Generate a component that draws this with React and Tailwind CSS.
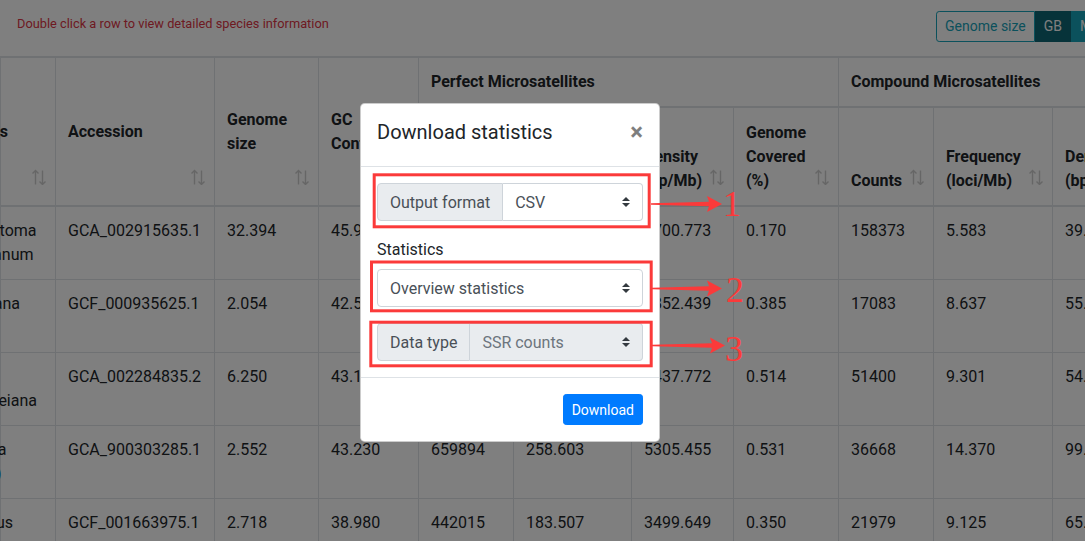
import React from 'react';

const widths = [55, 159, 104, 100, 95, 118, 102, 105, 95, 119, 130];

const rows = [
  {
    sp: [['Schistostoma', 35.5, ''], ['solanum', 32.5, '']],
    v: ['GCA_002915635.1', '32.394', '45.912', '1480389', '45.698', '4700.773', '0.170', '158373', '5.583', '39.581'],
  },
  {
    sp: [['Alternaria cassiana', 19, ''], ['\u00a0', 0, '']],
    v: ['GCF_000935625.1', '2.054', '42.512', '96318', '46.893', '2852.439', '0.385', '17083', '8.637', '55.207'],
  },
  {
    sp: [['\u00a0', 0, ''], ['thaleiana', 36, '']],
    v: ['GCA_002284835.2', '6.250', '43.125', '283140', '45.302', '4437.772', '0.514', '51400', '9.301', '54.918'],
  },
  {
    sp: [['Candida', 5.5, ''], ['(ref)', 0.5, 'text-[#007bff]']],
    v: ['GCA_900303285.1', '2.552', '43.230', '659894', '258.603', '5305.455', '0.531', '36668', '14.370', '99.623'],
  },
  {
    sp: [['Aspergillus', 12, ''], ['\u00a0', 0, '']],
    v: ['GCF_001663975.1', '2.718', '38.980', '442015', '183.507', '3499.649', '0.350', '21979', '9.125', '65.044'],
  },
];

function SortIcon() {
  return (
    <svg
      width="16"
      height="16"
      viewBox="0 0 16 16"
      fill="none"
      stroke="#cdcdcd"
      strokeWidth="1.4"
      className="absolute right-[8px] bottom-[20px]"
    >
      <path d="M4.5 15.5V1.5M1.5 4.5l3-3 3 3" />
      <path d="M11.5 1.5v14M8.5 12.5l3 3 3-3" />
    </svg>
  );
}

function Line({ text, end, className = '' }) {
  return (
    <div className={`flex justify-end ${className}`} style={{ width: end }}>
      <span className="whitespace-nowrap">{text}</span>
    </div>
  );
}

function SelectArrows() {
  return (
    <svg width="8" height="10" viewBox="0 0 4 5">
      <path fill="#343a40" d="M2 0L0 2h4zm0 5L0 3h4z" />
    </svg>
  );
}

function arrowPoints(x1, y, x2) {
  return `${x1},${y - 0.7} ${x2 - 13},${y - 2.2} ${x2 - 15},${y - 8} ${x2},${y} ${x2 - 15},${y + 8} ${x2 - 13},${y + 2.2} ${x1},${y + 0.7}`;
}

const th = 'relative border border-[#dee2e6] border-b-2 px-3 py-3 text-left font-bold';
const th2 = 'relative border border-[#dee2e6] border-b-2 px-3 pt-[13px] pb-3 text-left font-bold align-bottom';
const td = 'border border-[#dee2e6] px-3 py-3 align-top';

export default function App() {
  return (
    <div className="relative w-[1085px] h-[541px] overflow-hidden bg-white font-['Roboto',sans-serif] text-[#212529]">
      {/* Page behind */}
      <div className="w-[1182px]">
        <div className="flex items-start justify-between h-[57px] border-b border-[#dee2e6] w-[1110px]">
          <small className="ml-[17px] mt-[14px] text-[12.8px] leading-[19px] text-[#dc3545]">
            Double click a row to view detailed species information
          </small>
          <div className="flex mt-[11px] h-[31px] text-[14px] leading-[21px]">
            <div className="flex items-center px-2 border border-[#17a2b8] rounded-l-[3.2px] text-[#17a2b8]">
              Genome size
            </div>
            <div className="flex items-center px-2 bg-[#0f6674] border border-[#0f6674] text-white">GB</div>
            <div className="flex items-center px-2 bg-[#17a2b8] border border-[#17a2b8] text-white">MB</div>
          </div>
        </div>
        <table className="table-fixed border-collapse w-[1182px] text-[16px] leading-6">
          <colgroup>
            {widths.map((w, i) => (
              <col key={i} style={{ width: w }} />
            ))}
          </colgroup>
          <thead>
            <tr>
              <th rowSpan={2} className={`${th} align-middle !pl-0`}>
                <Line text="Species" end={7} />
                <SortIcon />
              </th>
              <th rowSpan={2} className={`${th} align-middle`}>
                Accession
                <SortIcon />
              </th>
              <th rowSpan={2} className={`${th} align-middle`}>
                Genome size
                <SortIcon />
              </th>
              <th rowSpan={2} className={`${th} align-middle`}>
                GC Content
                <SortIcon />
              </th>
              <th colSpan={4} className={`${th} align-bottom`}>
                Perfect Microsatellites
              </th>
              <th colSpan={3} className={`${th} align-bottom`}>
                Compound Microsatellites
              </th>
            </tr>
            <tr>
              <th className={th2}>
                Counts
                <SortIcon />
              </th>
              <th className={th2}>
                Frequency (loci/Mb)
                <SortIcon />
              </th>
              <th className={th2}>
                Density (bp/Mb)
                <SortIcon />
              </th>
              <th className={th2}>
                Genome Covered (%)
                <SortIcon />
              </th>
              <th className={th2}>
                Counts
                <SortIcon />
              </th>
              <th className={th2}>
                Frequency (loci/Mb)
                <SortIcon />
              </th>
              <th className={th2}>
                Density (bp/Mb)
                <SortIcon />
              </th>
            </tr>
          </thead>
          <tbody>
            {rows.map((r, i) => (
              <tr key={i}>
                <td className={`${td} !pl-0`}>
                  {r.sp.map(([t, e, c], j) => (
                    <Line key={j} text={t} end={e} className={c} />
                  ))}
                </td>
                {r.v.map((v, j) => (
                  <td key={j} className={td}>
                    {v}
                  </td>
                ))}
              </tr>
            ))}
          </tbody>
        </table>
      </div>

      {/* Backdrop */}
      <div className="absolute inset-0 bg-black/50" />

      {/* Modal */}
      <div className="absolute left-[360px] top-[103px] w-[300px] bg-white border border-black/20 rounded-[4.8px]">
        <div className="flex items-start justify-between p-4 border-b border-[#dee2e6]">
          <h5 className="-mt-[3px] mb-[3px] text-[20px] leading-[30px] font-normal text-[#212529]">Download statistics</h5>
          <button className="-m-4 p-4 text-[24px] leading-6 font-bold text-black opacity-50">×</button>
        </div>
        <div className="p-4">
          <div className="flex h-[38px] mb-4 text-[16px] leading-6">
            <div className="flex items-center pt-[2px] px-3 bg-[#e9ecef] border border-[#ced4da] rounded-l-[4px] text-[#495057]">
              Output format
            </div>
            <div className="flex flex-1 items-center justify-between px-3 border border-l-0 border-[#ced4da] rounded-r-[4px] text-[#495057] bg-white">
              <span className="pt-[2px]">CSV</span>
              <SelectArrows />
            </div>
          </div>
          <label className="block pt-[1px] mb-[7px] text-[16px] leading-6 text-[#212529]">Statistics</label>
          <div className="flex h-[38px] mb-4 items-center justify-between px-3 border border-[#ced4da] rounded-[4px] text-[16px] leading-6 text-[#495057] bg-white">
            <span className="pt-[2px]">Overview statistics</span>
            <SelectArrows />
          </div>
          <div className="flex h-[38px] text-[16px] leading-6">
            <div className="flex items-center pt-[2px] px-3 bg-[#e9ecef] border border-[#ced4da] rounded-l-[4px] text-[#495057]">
              Data type
            </div>
            <div className="flex flex-1 items-center justify-between px-3 border border-l-0 border-[#ced4da] rounded-r-[4px] text-[#6c757d] bg-[#e9ecef]">
              <span className="pt-[2px]">SSR counts</span>
              <SelectArrows />
            </div>
          </div>
        </div>
        <div className="flex justify-end p-4 border-t border-[#dee2e6]">
          <button className="h-[31px] px-2 pt-[1px] bg-[#007bff] border border-[#007bff] rounded-[3.2px] text-white text-[14px] leading-[21px]">
            Download
          </button>
        </div>
      </div>

      {/* Annotations */}
      <svg className="absolute inset-0 pointer-events-none" width="1085" height="541" viewBox="0 0 1085 541">
        <g fill="none" stroke="#fb3a3a" strokeWidth="3">
          <rect x="374.2" y="174.8" width="275" height="52" />
          <rect x="371.5" y="262" width="279.7" height="48.8" />
          <rect x="370.8" y="322.2" width="280.4" height="43.6" />
        </g>
        <g fill="#fb3a3a">
          <polygon points={arrowPoints(651, 204, 722)} />
          <polygon points={arrowPoints(652, 288.5, 722)} />
          <polygon points={arrowPoints(652, 345.5, 725)} />
        </g>
        <g fill="#fb3a3a" fontFamily="'Liberation Serif', serif" fontSize="36">
          <text x="723" y="216">1</text>
          <text x="726" y="301.5">2</text>
          <text x="725" y="360.5">3</text>
        </g>
      </svg>
    </div>
  );
}
